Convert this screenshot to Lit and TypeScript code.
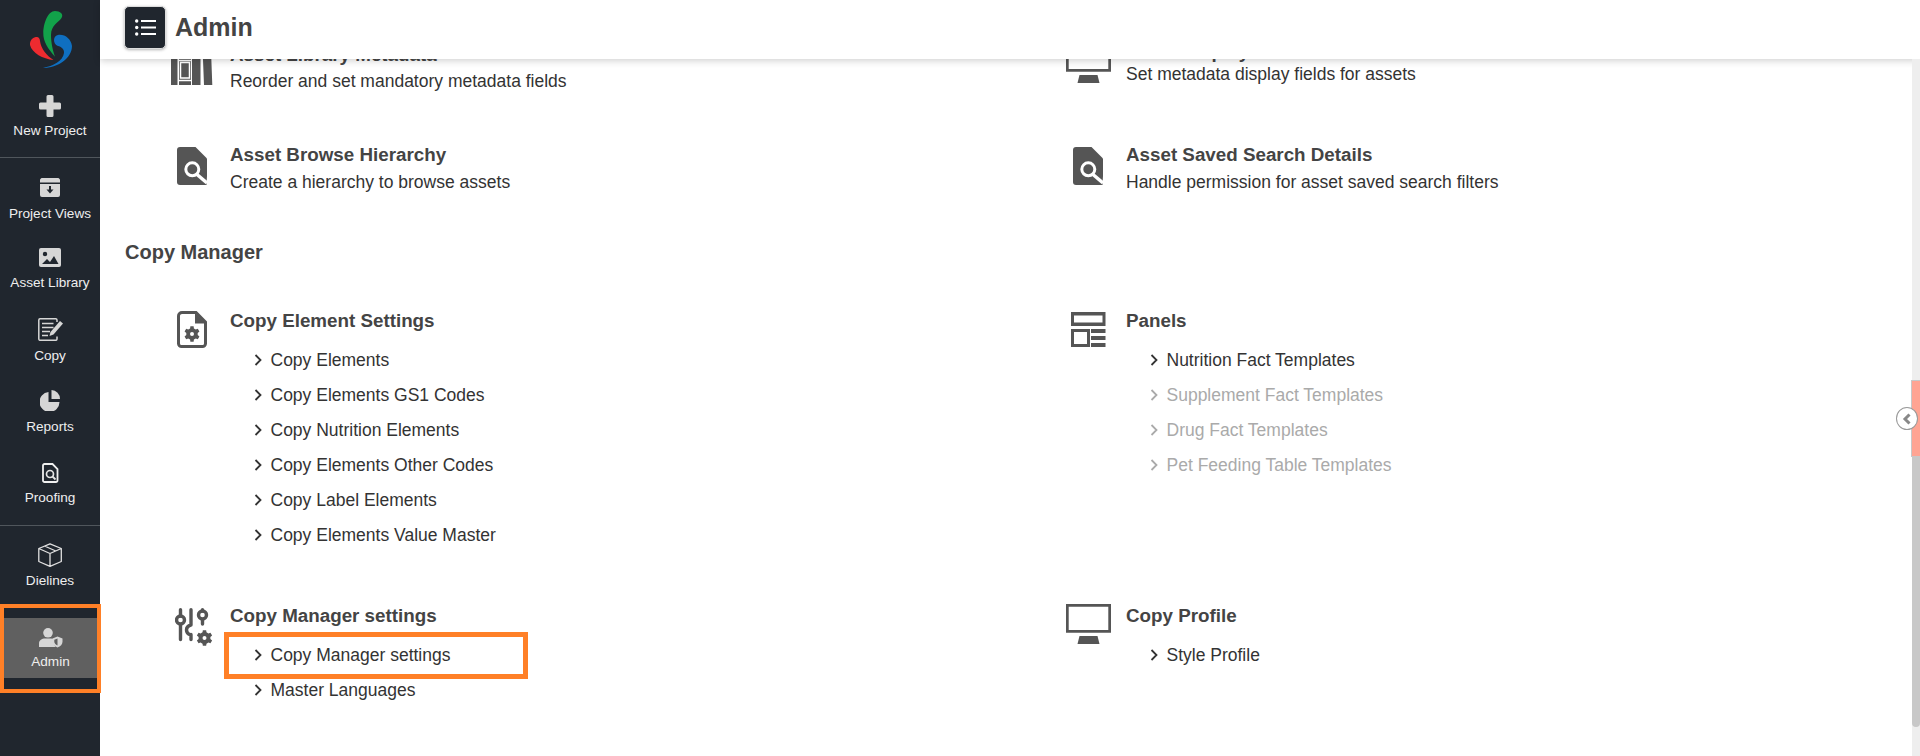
import { LitElement, html, css, svg } from "lit";
import { customElement } from "lit/decorators.js";

const gear = (cx: number, cy: number, ro: number, ri: number, hole: number, teeth = 6) => {
  const pts: string[] = [];
  const step = (Math.PI * 2) / teeth;
  for (let i = 0; i < teeth; i++) {
    const a = i * step - Math.PI / 2;
    const w = step * 0.2;
    const p = (r: number, t: number) => `${(cx + r * Math.cos(t)).toFixed(2)} ${(cy + r * Math.sin(t)).toFixed(2)}`;
    pts.push(p(ri, a - step * 0.32), p(ro, a - w), p(ro, a + w), p(ri, a + step * 0.32));
  }
  return `M${pts.join("L")}zM${cx - hole} ${cy}a${hole} ${hole} 0 1 0 ${hole * 2} 0a${hole} ${hole} 0 1 0 ${-hole * 2} 0z`;
};

const chevron = html`<svg class="chev" viewBox="0 0 8 12"><path d="M1.500 1l5 5-5 5" fill="none" stroke="currentColor" stroke-width="1.800"/></svg>`;

const icons: Record<string, any> = {
  search: svg`<path fill="#555" d="M3 0h15.500L30 11.500V29l-.5 9H3a3 3 0 0 1-3-3V3a3 3 0 0 1 3-3z"/><circle cx="15.300" cy="22.300" r="6.500" fill="none" stroke="#fff" stroke-width="3"/><path d="M20 27.500l10 8.500" stroke="#fff" stroke-width="3.400"/>`,
  fileGear: svg`<path fill="none" stroke="#555" stroke-width="3" d="M5 1.500h14L28.500 11v21.500a3 3 0 0 1-3 3H4.500a3 3 0 0 1-3-3V5a3.500 3.500 0 0 1 3.500-3.500z"/><path fill="#555" d="M18 2v10.500h11z"/><path fill="#555" fill-rule="evenodd" d="${gear(15, 23, 7.8, 5.8, 2)}"/>`,
  panels: svg`<path fill="#555" fill-rule="evenodd" d="M0 0h34.500v14H0zM3 3.500v7h28.500v-7zM0 17h19v18H0zM3 20v12h13V20zM20 17h14.500v4H20zM20 24h14.500v4H20zM20 31h14.500v4H20z"/>`,
  monitor: svg`<path fill="#555" fill-rule="evenodd" d="M0 0h45v28.700H0zM2.700 2.700v23.300h39.600V2.700zM13.500 32h18l2 8h-22z"/>`,
  books: svg`<path fill="#555" fill-rule="evenodd" d="M0 0h6.500v43H0zM8 0h12v43H8zM21 0h8.500v43H21zM31.300 0h8.400l1.600 43h-8.300z"/><path fill="none" stroke="#fff" stroke-width="1.500" d="M9.500 20.500h9v15.500h-9zM8 38.500h12M8 18.500h12"/>`,
  sliders: svg`<g fill="none" stroke="#555" stroke-width="3.400" stroke-linecap="round"><path d="M5.500 1.700V8M5.500 16.500V31.500M16 1.700V17M16 26.500V31.500M16 17c-3.500 1-4.500 3-4.500 5s1 4 4 5M27.500 1.700V3M27.500 11.500V16"/><circle cx="5.500" cy="12" r="4"/><circle cx="27.500" cy="7" r="4"/></g><path fill="#555" fill-rule="evenodd" d="${gear(29.5, 30, 8, 6, 2)}"/>`,
};

const navIcons: Record<string, any> = {
  plus: svg`<path fill="#d6d6d6" d="M7.500 1.500A1.500 1.500 0 0 1 9 0h4a1.500 1.500 0 0 1 1.500 1.500v6h6A1.500 1.500 0 0 1 22 9v4a1.500 1.500 0 0 1-1.500 1.500h-6v6A1.500 1.500 0 0 1 13 22H9a1.500 1.500 0 0 1-1.500-1.500v-6h-6A1.500 1.500 0 0 1 0 13V9a1.500 1.500 0 0 1 1.500-1.500h6z"/>`,
  archive: svg`<path fill="#d6d6d6" d="M3 0h14a2.500 2.500 0 0 1 3 3v1.500H0V3A2.500 2.500 0 0 1 3 0zM0 6h20v11a2 2 0 0 1-2 2H2a2 2 0 0 1-2-2z"/><path d="M9 8h2v3.500h2.500L10 15.500l-3.500-4H9z" fill="#20262e"/>`,
  image: svg`<path fill="#d6d6d6" d="M2 0h18a2 2 0 0 1 2 2v15a2 2 0 0 1-2 2H2a2 2 0 0 1-2-2V2a2 2 0 0 1 2-2z"/><circle cx="6" cy="6" r="2.200" fill="#20262e"/><path d="M3 16l5-5 3 3 4-6 4.500 8z" fill="#20262e"/>`,
  copy: svg`<path fill="none" stroke="#d6d6d6" stroke-width="1.500" d="M19 18.500V21a1.300 1.300 0 0 1-1.300 1.300H2A1.300 1.300 0 0 1 .8 21V2A1.300 1.300 0 0 1 2 .8h15.700A1.300 1.300 0 0 1 19 2v2"/><path stroke="#d6d6d6" stroke-width="1.600" d="M4 5.500h11.500M4 9.500h11.500M4 13.500h8M4 17.500h6"/><path fill="#d6d6d6" d="M22 3l3 2.500-9.500 11-4 1.500 1-4z"/>`,
  pie: svg`<path fill="#d6d6d6" d="M8.500 2v10h11A10 10 0 1 1 8.500 2z"/><path fill="#d6d6d6" d="M11.500 0A9 9 0 0 1 20 9h-8.500z"/>`,
  proof: svg`<path fill="none" stroke="#f0f0f0" stroke-width="1.800" d="M2.500 1H10.500L15.500 6V17.500a1.500 1.500 0 0 1-1.500 1.500H2.500A1.500 1.500 0 0 1 1 17.500V2.500A1.500 1.500 0 0 1 2.500 1z"/><circle cx="8" cy="11" r="3.500" fill="none" stroke="#e6e6e6" stroke-width="1.700"/><path d="M10.500 13.500l3 3" stroke="#e6e6e6" stroke-width="1.800"/>`,
  box: svg`<g fill="none" stroke="#e0e0e0" stroke-width="1.300" stroke-linejoin="round"><path d="M12 .8L23.300 5.500v13L12 23.300.8 18.500v-13zM.8 5.500L12 10.500l11.300-5M12 10.500v12.800M6.500 3l11.300 5"/></g>`,
  admin: svg`<circle cx="9" cy="4.800" r="4.800" fill="#d6d6d6"/><path d="M0 19v-3.500C0 12 3 10.500 6 10.500h6c1 0 2 .3 2.800.7V14c0 2 .7 3.700 1.800 5z" fill="#d6d6d6"/><path d="M18.500 8.500l5 2v3c0 3-2 5-5 6-3-1-5-3-5-6v-3z" fill="#d6d6d6"/><path d="M18.500 10.500v7c-2-.8-3.200-2.200-3.200-4v-1.800z" fill="#606060"/>`,
};

type Nav = { icon: string; w: number; h: number; label: string; top: number; gap: number };
const group1: Nav[] = [
  { icon: "archive", w: 20, h: 19, label: "Project Views", top: 20, gap: 8.5 },
  { icon: "image", w: 22, h: 19, label: "Asset Library", top: 27.5, gap: 7.5 },
  { icon: "copy", w: 25, h: 23, label: "Copy", top: 28.5, gap: 6.5 },
  { icon: "pie", w: 20, h: 21, label: "Reports", top: 27.5, gap: 7.5 },
  { icon: "proof", w: 17, h: 20, label: "Proofing", top: 29.5, gap: 7 },
];
const group2: Nav[] = [{ icon: "box", w: 24, h: 24, label: "Dielines", top: 17, gap: 6 }];

@customElement("app-root")
export class AppRoot extends LitElement {
  static styles = css`
    :host { display: block; width: 1920px; height: 756px; overflow: hidden; position: relative; font-family: "Liberation Sans", Arial, sans-serif; background: #fff; }
    * { box-sizing: border-box; }
    .shell { display: flex; height: 756px; }
    .side { width: 100px; flex: none; background: #20262e; color: #eee; display: flex; flex-direction: column; align-items: stretch; }
    .logo { height: 95px; flex: none; display: flex; align-items: flex-start; justify-content: center; padding: 11px 0 0 2px; }
    .nav { display: flex; flex-direction: column; align-items: center; font-size: 13.6px; line-height: 15px; color: #eee; text-align: center; white-space: nowrap; }
    .nav svg { display: block; flex: none; }
    .new { height: 62px; gap: 5.5px; }
    .rule { height: 1px; background: #50565c; flex: none; }
    .rule2 { margin-top: 19.500px; }
    .main { flex: 1; min-width: 0; display: flex; flex-direction: column; position: relative; }
    .top { height: 59px; flex: none; background: #fff; box-shadow: 0 2px 7px rgba(0,0,0,.18); display: flex; align-items: center; gap: 9px; padding: 0 0 4px 24px; position: relative; z-index: 2; }
    .menu { width: 42px; height: 43.500px; border-radius: 5px; background: #20262e; border: 1px solid #ddd; box-shadow: 0 1px 3px rgba(0,0,0,.3); display: flex; align-items: center; justify-content: center; }
    .top h1 { margin: 0; font-size: 25px; font-weight: bold; color: #444; }
    .view { flex: 1; overflow: hidden; position: relative; }
    .content { margin-top: -17px; padding: 0 0 0 25px; }
    .grid { display: grid; grid-template-columns: 896px 1fr; }
    .r1 { margin-bottom: 52px; }
    .r2 { margin-bottom: 48px; }
    .r3 { margin-bottom: 51.500px; }
    .item { display: flex; padding-left: 45px; }
    .ico { width: 60px; padding-right: 16px; flex: none; display: flex; justify-content: center; }
    .ico svg { display: block; flex: none; }
    .body { flex: 1; min-width: 0; }
    .up { margin-top: -2.500px; }
    .up .d { margin-top: 2px; }
    .dn { margin-top: 1px; }
    .dn .d { margin-top: 6px; }
    .t { font-size: 18.800px; font-weight: bold; color: #444; line-height: 22px; padding-top: 1px; margin-bottom: -1px; white-space: nowrap; }
    .d { font-size: 17.500px; color: #333; line-height: 20px; margin-top: 7px; white-space: nowrap; }
    .sect { font-size: 20px; font-weight: bold; color: #444; line-height: 22px; padding-top: 1px; margin-bottom: 46px; }
    ul { list-style: none; margin: 0; padding: 11.500px 0 0 23.500px; }
    li { height: 35px; display: flex; align-items: center; gap: 9px; font-size: 17.500px; color: #333; white-space: nowrap; }
    li.off { color: #aaa; }
    .chev { width: 8px; height: 12px; flex: none; }
    .hl { position: relative; }
    .hlbox { position: absolute; left: -6px; top: 6px; width: 304px; height: 47px; border: 5px solid #ff8027; pointer-events: none; }
    .adminHl { position: absolute; left: 0; top: 604px; width: 101px; height: 89px; border: 4px solid #ff8027; background: #20262e; display: flex; flex-direction: column; }
    .adminInner { flex: 1; margin: 10px 0 11px; background: #606060; display: flex; flex-direction: column; align-items: center; padding-top: 10px; gap: 5.500px; color: #eee; font-size: 13.600px; line-height: 15px; }
    .bar { position: absolute; right: 0; top: 59px; width: 8px; height: 697px; z-index: 3; display: flex; flex-direction: column; background: #eee; }
    .bar .a { height: 321px; flex: none; }
    .bar .b { height: 77px; flex: none; background: #ffa493; margin-left: -1.500px; border: 1px solid #c8c8c8; border-right: 0; }
    .bar .c { height: 270px; flex: none; background: #c8c8c8; border-radius: 0 0 4px 4px; }
    .toggle { position: absolute; right: 2px; top: 407px; width: 22px; height: 23px; border-radius: 50%; background: #fff; border: 1px solid #999; z-index: 4; display: flex; align-items: center; justify-content: center; color: #888; }
  `;

  private nav(n: Nav) {
    return html`<div class="nav" style="padding-top:${n.top}px;gap:${n.gap}px"><svg width=${n.w} height=${n.h} viewBox="0 0 ${n.w} ${n.h}">${navIcons[n.icon]}</svg><span>${n.label}</span></div>`;
  }

  private item(ic: string, w: number, h: number, mt: number, title: string, extra: any, shift = "", dx = 0) {
    return html`<div class="item">
      <div class="ico"><svg style="margin:${mt}px 0 0 ${dx}px" width=${w} height=${h} viewBox="0 0 ${w} ${h}">${icons[ic]}</svg></div>
      <div class="body ${shift}"><div class="t">${title}</div>${extra}</div>
    </div>`;
  }

  private list(rows: [string, boolean?][]) {
    return html`<ul>${rows.map(([r, off]) => html`<li class=${off ? "off" : ""}>${chevron}<span>${r}</span></li>`)}</ul>`;
  }

  render() {
    return html`<div class="shell">
      <aside class="side">
        <div class="logo">
          <svg width="42" height="57" viewBox="0 0 42 57">
            <path fill="#12a24a" d="M25 0C30 0 34 3 31.500 7C29 11 21 14 21 24C21 32 23 40 25 45.700C18 38 13 30 13.300 22C13.500 12 18 0 25 0z"/>
            <path fill="#ee2b30" d="M5 26.300C8 25 10 27 10 30C11 38 17 45 23.500 49C13 48 2 42 0 34C-.5 30 2 27 5 26.300z"/>
            <path fill="#0f6fc0" d="M28 24C35 23 41 28 42 35C42 47 28 57 13 57C23 55 33 50 34 42C34.500 38 31 35.500 28 35C25 34 24 31 24 29C24 26 26 24.500 28 24z"/>
          </svg>
        </div>
        <div class="nav new">
          <svg width="22" height="22" viewBox="0 0 22 22">${navIcons.plus}</svg>
          <span>New Project</span>
        </div>
        <div class="rule"></div>
        ${group1.map((n) => this.nav(n))}
        <div class="rule rule2"></div>
        ${group2.map((n) => this.nav(n))}
      </aside>
      <main class="main">
        <header class="top">
          <div class="menu">
            <svg width="21" height="17" viewBox="0 0 21 17"><g fill="#fff"><circle cx="1.700" cy="2" r="1.700"/><circle cx="1.700" cy="8.500" r="1.700"/><circle cx="1.700" cy="15" r="1.700"/><rect x="6" y="1" width="15" height="2"/><rect x="6" y="7.500" width="15" height="2"/><rect x="6" y="14" width="15" height="2"/></g></svg>
          </div>
          <h1>Admin</h1>
        </header>
        <div class="view">
          <div class="content">
            <div class="grid r1">
              ${this.item("books", 42, 43, 0, "Asset Library Metadata", html`<div class="d">Reorder and set mandatory metadata fields</div>`, "dn")}
              ${this.item("monitor", 45, 40, 1, "Asset Display Details", html`<div class="d">Set metadata display fields for assets</div>`, "up")}
            </div>
            <div class="grid r2">
              ${this.item("search", 30, 38, 4, "Asset Browse Hierarchy", html`<div class="d">Create a hierarchy to browse assets</div>`)}
              ${this.item("search", 30, 38, 4, "Asset Saved Search Details", html`<div class="d">Handle permission for asset saved search filters</div>`)}
            </div>
            <div class="sect">Copy Manager</div>
            <div class="grid r3">
              ${this.item("fileGear", 30, 37, 2, "Copy Element Settings", this.list([["Copy Elements"], ["Copy Elements GS1 Codes"], ["Copy Nutrition Elements"], ["Copy Elements Other Codes"], ["Copy Label Elements"], ["Copy Elements Value Master"]]))}
              ${this.item("panels", 35, 35, 3, "Panels", this.list([["Nutrition Fact Templates"], ["Supplement Fact Templates", true], ["Drug Fact Templates", true], ["Pet Feeding Table Templates", true]]))}
            </div>
            <div class="grid">
              ${this.item("sliders", 38, 38, 4, "Copy Manager settings", html`<div class="hl"><div class="hlbox"></div>${this.list([["Copy Manager settings"], ["Master Languages"]])}</div>`, "", 4)}
              ${this.item("monitor", 45, 40, 0, "Copy Profile", this.list([["Style Profile"]]))}
            </div>
          </div>
        </div>
      </main>
    </div>
    <div class="adminHl"><div class="adminInner">
      <svg width="24" height="20" viewBox="0 0 24 20">${navIcons.admin}</svg><span>Admin</span>
    </div></div>
    <div class="bar"><div class="a"></div><div class="b"></div><div class="c"></div></div>
    <div class="toggle"><svg width="10" height="12" viewBox="0 0 10 12"><path d="M7.500 1.500L3 6l4.500 4.500" fill="none" stroke="currentColor" stroke-width="3"/></svg></div>`;
  }
}
